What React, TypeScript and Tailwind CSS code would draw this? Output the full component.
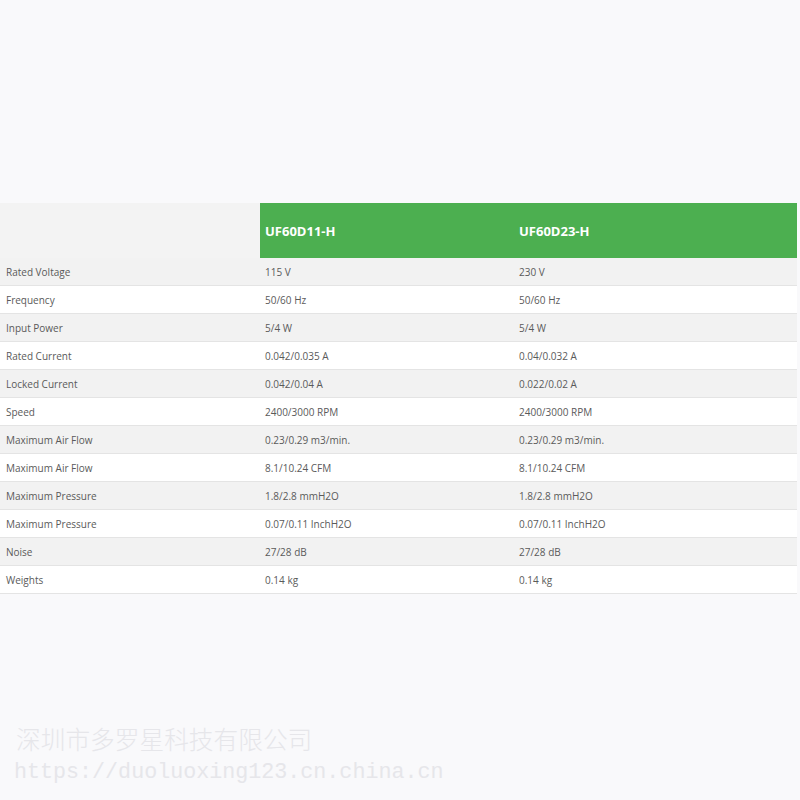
const rows: [string, string, string][] = [
  ["Rated Voltage", "115 V", "230 V"],
  ["Frequency", "50/60 Hz", "50/60 Hz"],
  ["Input Power", "5/4 W", "5/4 W"],
  ["Rated Current", "0.042/0.035 A", "0.04/0.032 A"],
  ["Locked Current", "0.042/0.04 A", "0.022/0.02 A"],
  ["Speed", "2400/3000 RPM", "2400/3000 RPM"],
  ["Maximum Air Flow", "0.23/0.29 m3/min.", "0.23/0.29 m3/min."],
  ["Maximum Air Flow", "8.1/10.24 CFM", "8.1/10.24 CFM"],
  ["Maximum Pressure", "1.8/2.8 mmH2O", "1.8/2.8 mmH2O"],
  ["Maximum Pressure", "0.07/0.11 InchH2O", "0.07/0.11 InchH2O"],
  ["Noise", "27/28 dB", "27/28 dB"],
  ["Weights", "0.14 kg", "0.14 kg"],
];

export default function App() {
  return (
    <div className="h-[800px] w-[800px] overflow-hidden bg-[#f9f9fb] pt-[203px] font-['Open_Sans',sans-serif]">
      <div className="w-[797px]">
        <div className="flex h-[55px] bg-[#f3f3f3]">
          <div className="w-[260px]" />
          <div className="flex flex-1 items-center bg-[#4caf50] pt-[2px] text-[13px] font-bold text-white">
            <span className="w-[254px] pl-[5px]">UF60D11-H</span>
            <span className="pl-[5px]">UF60D23-H</span>
          </div>
        </div>
        {rows.map(([label, a, b], i) => (
          <div
            key={i}
            className={`flex h-[28px] items-center border-b border-[#e4e4e4] pt-[2px] text-[10px] text-[#5a5a5a] ${
              i % 2 === 0 ? "bg-[#f2f2f2]" : "bg-white"
            }`}
          >
            <span className="w-[260px] pl-[6px]">{label}</span>
            <span className="w-[254px] pl-[5px]">{a}</span>
            <span className="flex-1 pl-[5px]">{b}</span>
          </div>
        ))}
      </div>
      <div className="mt-[129px] pl-[16px] font-['Noto_Sans_CJK_SC',sans-serif] text-[24.7px] font-light leading-[30px] text-[#e6e6ea]">
        深圳市多罗星科技有限公司
      </div>
      <div className="mt-[4px] pl-[14px] font-['Liberation_Mono',monospace] text-[21.7px] leading-[31px] text-[#e6e6ea]">
        https://duoluoxing123.cn.china.cn
      </div>
    </div>
  );
}
